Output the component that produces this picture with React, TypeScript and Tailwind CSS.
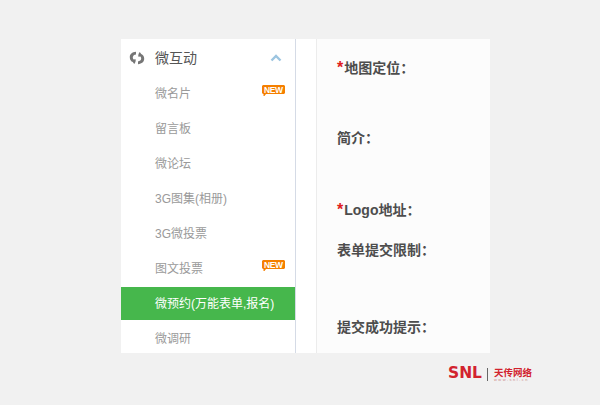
const font = { fontFamily: '"Liberation Sans", "Noto Sans CJK SC", sans-serif' };

function NewBadge() {
  return (
    <svg className="absolute right-[10px] top-[9px]" width="23" height="12" viewBox="0 0 23 12">
      <path d="M1 0h21l1 1v7l-1 1H4L2.500 11H1.500V9H1L0 8V1z" fill="#f57f00" />
      <text x="11.500" y="7.700" textAnchor="middle" fill="#fff" fontSize="8.500" fontWeight="700" fontFamily="Liberation Sans" textLength="19" lengthAdjust="spacing">NEW</text>
    </svg>
  );
}

function SwapIcon() {
  return (
    <svg width="16" height="14" viewBox="0 0 16 14" fill="#767676">
      <path d="M7 .8 C3 1.200 .8 3.200 .8 6.200 C.8 8.600 2 10.400 3.800 11 L5.200 13 C6.400 11.600 7 9.800 6.600 8.200 L4.600 8.400 C3.800 7.600 3.600 6.400 4 5.400 C4.400 4.400 5.600 3.800 7 3.600 Z" />
      <path d="M9 13.200 C13 12.800 15.200 10.800 15.200 7.800 C15.200 5.400 14 3.600 12.200 3 L10.800 1 C9.600 2.400 9 4.200 9.400 5.800 L11.400 5.600 C12.200 6.400 12.400 7.600 12 8.600 C11.600 9.600 10.400 10.200 9 10.400 Z" />
    </svg>
  );
}

const items: { label: string; badge?: boolean; active?: boolean }[] = [
  { label: "微名片", badge: true },
  { label: "留言板" },
  { label: "微论坛" },
  { label: "3G图集(相册)" },
  { label: "3G微投票" },
  { label: "图文投票", badge: true },
  { label: "微预约(万能表单,报名)", active: true },
  { label: "微调研" },
];

const fields: { label: string; star?: boolean; h: string }[] = [
  { label: "地图定位：", star: true, h: "h-[70px]" },
  { label: "简介：", h: "h-[72px]" },
  { label: "Logo地址：", star: true, h: "h-[40px]" },
  { label: "表单提交限制：", h: "h-[77px]" },
  { label: "提交成功提示：", h: "h-[24px]" },
];

export default function App() {
  return (
    <div className="w-[600px] h-[405px] bg-[#f1f1f1] overflow-hidden pt-[39px] pl-[121px]" style={font}>
      <div className="w-[369px] h-[314px] bg-white flex overflow-hidden">
        <div className="w-[175px] shrink-0 border-r border-[#d5dbe6]">
          <div className="h-[37px] flex items-center pl-[8px] pr-[13px] text-[14px] text-[#555]">
            <SwapIcon />
            <span className="ml-[10px] flex-1 pt-[2px]">微互动</span>
            <svg width="12" height="8" viewBox="0 0 12 8" fill="none" stroke="#9cc5e0" strokeWidth="2.4">
              <path d="M1.500 6.500 6 2l4.500 4.500" />
            </svg>
          </div>
          {items.map((it) => (
            <div key={it.label} className="h-[35px] relative flex items-center">
              {it.active ? (
                <div className="h-[33px] w-full bg-[#46b74c] text-white text-[12px] flex items-center pl-[34px]">{it.label}</div>
              ) : (
                <div className="pl-[34px] text-[12px] text-[#9a9a9a]">{it.label}</div>
              )}
              {it.badge && <NewBadge />}
            </div>
          ))}
        </div>
        <div className="w-[21px] shrink-0 border-r border-[#ececec]" />
        <div className="flex-1 bg-[#fcfcfc] pl-[20px] pt-[17px] text-[14px] font-bold text-[#4d4d4d]">
          {fields.map((f) => (
            <div key={f.label} className={f.h + " leading-[24px] whitespace-nowrap"}>
              {f.star && <span className="text-[#e02020] text-[16px] mr-px">*</span>}
              {f.label}
            </div>
          ))}
        </div>
      </div>
      <div className="flex justify-end items-center w-[411px] mt-[9px] h-[24px]">
        <span className="text-[#d2232e] text-[15.500px] font-bold leading-none" style={{ fontFamily: '"DejaVu Sans", sans-serif' }}>SNL</span>
        <span className="w-px h-[13px] bg-[#666] ml-[5px] mr-[6px]" />
        <div className="flex flex-col items-start">
          <span className="text-[#d2232e] text-[9.500px] font-bold leading-[11px]">天传网络</span>
          <span className="text-[#c98a8a] text-[4px] leading-[4px] tracking-[1.5px]">www.snl.cn</span>
        </div>
      </div>
    </div>
  );
}
